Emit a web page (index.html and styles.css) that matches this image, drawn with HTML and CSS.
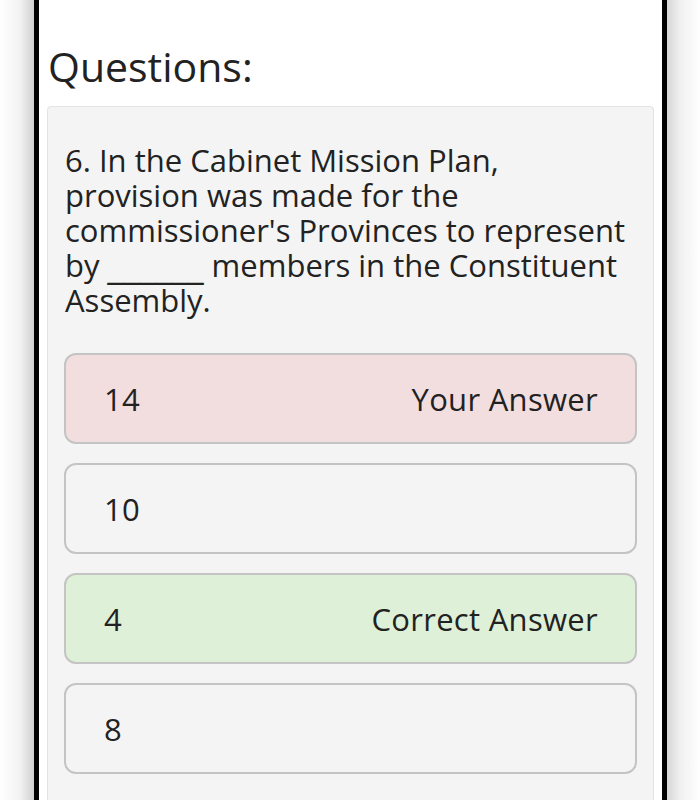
FILE: index.html
```html
<!DOCTYPE html>
<html lang="en">
<head>
<meta charset="utf-8">
<title>Questions</title>
<link rel="stylesheet" href="styles.css">
</head>
<body>
<div class="screen">
  <div class="gutter gutter-left"></div>
  <main class="frame">
    <h1 class="title">Questions:</h1>
    <section class="card">
      <p class="question">6. In the Cabinet Mission Plan, provision was made for the commissioner's Provinces to represent by <span class="blank">______</span> members in the Constituent Assembly.</p>
      <ul class="options">
        <li class="option option-wrong"><span>14</span><span>Your Answer</span></li>
        <li class="option"><span>10</span></li>
        <li class="option option-right"><span>4</span><span>Correct Answer</span></li>
        <li class="option"><span>8</span></li>
      </ul>
    </section>
  </main>
  <div class="gutter gutter-right"></div>
</div>
</body>
</html>
```
FILE: styles.css
```css
html, body {
  margin: 0;
  padding: 0;
  height: 100%;
  overflow: hidden;
  background: #fff;
}
body {
  font-family: "Open Sans", "Noto Sans", sans-serif;
  color: #222;
}
.screen {
  display: flex;
  height: 800px;
  overflow: hidden;
}
.gutter-left {
  width: 34px;
  background: linear-gradient(to right, #ffffff 0%, #f2f2f2 60%, #cfcfcf 100%);
}
.gutter-right {
  flex: 1;
  background: linear-gradient(to right, #d6d6d6 0%, #f0f0f0 40%, #ffffff 100%);
}
.frame {
  border-left: 5px solid #000;
  border-right: 5px solid #000;
  background: #fff;
  padding: 0 8px;
  box-sizing: content-box;
  width: 607px;
  overflow: hidden;
}
.title {
  margin: 42px 0 0 1px;
  font-size: 41px;
  line-height: 48px;
  font-weight: 400;
  color: #222;
}
.card {
  margin-top: 16px;
  background: #f4f4f4;
  border: 1px solid #e3e3e3;
  border-radius: 4px;
  padding: 36px 16px 40px;
  height: 800px;
}
.question {
  margin: 0 0 35px 1px;
  font-size: 31px;
  line-height: 35px;
}
.blank {
  font-family: "DejaVu Sans", sans-serif;
  font-size: 32px;
  line-height: 0;
}
.options {
  list-style: none;
  margin: 0;
  padding: 0;
  display: flex;
  flex-direction: column;
  gap: 19px;
}
.option {
  height: 91px;
  box-sizing: border-box;
  border: 2px solid #c4c4c4;
  border-radius: 12px;
  padding: 0 37px 0 38px;
  display: flex;
  align-items: center;
  justify-content: space-between;
  font-size: 31px;
  letter-spacing: 0.3px;
  background: #f4f4f4;
}
.option-wrong {
  background: #f2dede;
}
.option-right {
  background: #dff0d8;
}
```
